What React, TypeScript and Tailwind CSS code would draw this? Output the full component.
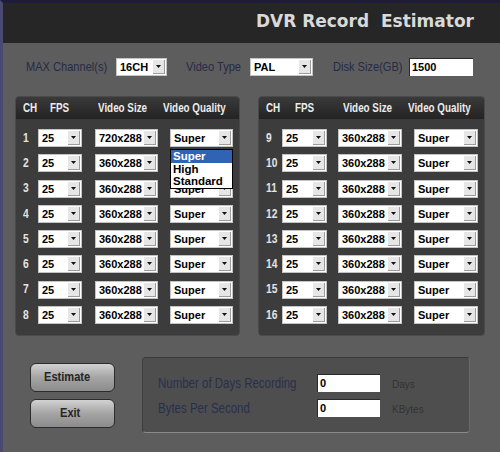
import type { ReactNode } from "react";

type Layout = {
  width: string;
  headPad: string;
  head: string[];
  ch: string;
  fps: string;
  size: string;
  sizeGap: string;
  quality: string;
  qualityGap: string;
};

const leftLayout: Layout = {
  width: "w-[225px]",
  headPad: "pl-[7px]",
  head: ["w-[29px]", "w-[51px]", "w-[68px]"],
  ch: "w-[15px]",
  fps: "w-[44px]",
  size: "w-[63px]",
  sizeGap: "ml-[13px]",
  quality: "w-[63px]",
  qualityGap: "ml-[12px]",
};

const rightLayout: Layout = {
  width: "w-[227px]",
  headPad: "pl-[7px]",
  head: ["w-[30px]", "w-[51px]", "w-[68px]"],
  ch: "w-[16px]",
  fps: "w-[45px]",
  size: "w-[64px]",
  sizeGap: "ml-[11px]",
  quality: "w-[64px]",
  qualityGap: "ml-[12px]",
};

// condensed look: no narrow face is installed, so squeeze Arial-metric text horizontally
function Narrow({ children, className = "" }: { children: ReactNode; className?: string }) {
  return (
    <span
      className={`inline-block origin-left scale-x-[0.82] whitespace-nowrap font-['Liberation_Sans',Arial,sans-serif] ${className}`}
    >
      {children}
    </span>
  );
}

function Select({ value, className = "" }: { value: string; className?: string }) {
  return (
    <div className={`flex h-[18px] shrink-0 items-stretch border border-[#c4c4c4] bg-white p-[1px] ${className}`}>
      <span className="flex-1 overflow-hidden whitespace-nowrap pl-[2px] font-['Liberation_Sans',Arial,sans-serif] text-[11px] font-bold leading-[15px] text-black">
        {value}
      </span>
      <span className="flex w-[12px] items-center justify-center border-b border-r border-[#9c9c9c] bg-[#e6e6e6]">
        <svg width="5" height="3" viewBox="0 0 5 3">
          <path d="M0 0h5L2.5 3z" fill="#111" />
        </svg>
      </span>
    </div>
  );
}

function Field({ value, className = "" }: { value: string; className?: string }) {
  return (
    <div
      className={`flex h-[18px] shrink-0 items-center border-l border-t border-[#2a2a2a] bg-white pl-[2px] font-['Liberation_Sans',Arial,sans-serif] text-[11px] font-bold text-black ${className}`}
    >
      {value}
    </div>
  );
}

function Panel({ first, layout, children }: { first: number; layout: Layout; children?: ReactNode }) {
  const rows = Array.from({ length: 8 }, (_, i) => first + i);
  return (
    <div className={`relative ${layout.width} h-[240px] rounded-[4px] border border-[#4a4a4a] bg-[#3c3c3c]`}>
      <div
        className={`flex h-[22px] items-center rounded-t-[4px] bg-gradient-to-b from-[#3a3a3a] to-[#232323] ${layout.headPad} text-[12px] font-bold text-[#ececec]`}
      >
        <span className={layout.head[0]}>
          <Narrow>CH</Narrow>
        </span>
        <span className={layout.head[1]}>
          <Narrow>FPS</Narrow>
        </span>
        <span className={layout.head[2]}>
          <Narrow>Video Size</Narrow>
        </span>
        <Narrow>Video Quality</Narrow>
      </div>
      <div className="flex flex-col gap-[7.3px] pl-[7px] pt-[10px]">
        {rows.map((n) => (
          <div key={n} className="flex h-[18px] items-center">
            <span className={`${layout.ch} text-[12.5px] font-bold text-[#e4e4e4]`}>
              <Narrow>{n}</Narrow>
            </span>
            <Select value="25" className={layout.fps} />
            <Select value={n === 1 ? "720x288" : "360x288"} className={`${layout.size} ${layout.sizeGap}`} />
            <Select value="Super" className={`${layout.quality} ${layout.qualityGap}`} />
          </div>
        ))}
      </div>
      {children}
    </div>
  );
}

function Button({ label }: { label: string }) {
  return (
    <div className="flex h-[29px] w-[85px] items-center justify-center rounded-[6px] border border-[#2c2c2c] bg-gradient-to-b from-[#d2d2d2] via-[#a4a4a4] to-[#8c8c8c] text-[13.5px] font-bold text-[#262626]">
      <Narrow className="origin-center">{label}</Narrow>
    </div>
  );
}

export default function App() {
  return (
    <div className="h-[452px] w-[500px] overflow-hidden border-l-[3px] border-t-[3px] border-l-[#4a4a70] border-t-[#1d1d3b] bg-[#5d5d5d]">
      <div className="flex h-[40px] justify-end bg-[#262626] pr-[26px] pt-[10px]">
        <span className="whitespace-pre font-['DejaVu_Sans',sans-serif] text-[17px] font-bold leading-none text-[#d9d9d9]">
          DVR Record  Estimator
        </span>
      </div>

      <div className="mt-[15px] flex h-[18px] items-center pl-[23px] text-[13.5px] text-[#262b48]">
        <span className="w-[90px]">
          <Narrow className="scale-x-[0.8]">MAX Channel(s)</Narrow>
        </span>
        <Select value="16CH" className="w-[51px]" />
        <span className="ml-[19px] w-[64px]">
          <Narrow className="scale-x-[0.8]">Video Type</Narrow>
        </span>
        <Select value="PAL" className="w-[63px]" />
        <span className="ml-[20px] w-[76px]">
          <Narrow className="scale-x-[0.8]">Disk Size(GB)</Narrow>
        </span>
        <Field value="1500" className="w-[64px]" />
      </div>

      <div className="mt-[20px] flex gap-[18px] pl-[12px]">
        <Panel first={1} layout={leftLayout}>
          <div className="absolute left-[154px] top-[52px] z-10 flex w-[63px] flex-col border border-black bg-white font-['Liberation_Sans',Arial,sans-serif] text-[11.5px] font-bold leading-[12.5px] text-black">
            <span className="bg-[#3163b5] pl-[2px] text-white">Super</span>
            <span className="pl-[2px]">High</span>
            <span className="pl-[2px]">Standard</span>
          </div>
        </Panel>
        <Panel first={9} layout={rightLayout} />
      </div>

      <div className="mt-[21px] flex pl-[27px]">
        <div className="flex flex-col gap-[7px] pt-[6px]">
          <Button label="Estimate" />
          <Button label="Exit" />
        </div>
        <div className="ml-[27px] flex h-[76px] w-[328px] flex-col gap-[8px] rounded-[4px] border border-b-[#8a8a8a] border-l-[#3e3e3e] border-r-[#6a6a6a] border-t-[#3a3a3a] bg-[#4e4e4e] pl-[15px] pt-[16px]">
          {[
            ["Number of Days Recording", "Days"],
            ["Bytes Per Second", "KBytes"],
          ].map(([label, unit]) => (
            <div key={label} className="flex h-[17px] items-center">
              <span className="w-[159px] text-[14px] text-[#2a2f4e]">
                <Narrow>{label}</Narrow>
              </span>
              <Field value="0" className="h-[17px] w-[63px]" />
              <span className="ml-[12px] pt-[3px] font-['Liberation_Sans',Arial,sans-serif] text-[10px] text-[#333]">
                {unit}
              </span>
            </div>
          ))}
        </div>
      </div>
    </div>
  );
}
